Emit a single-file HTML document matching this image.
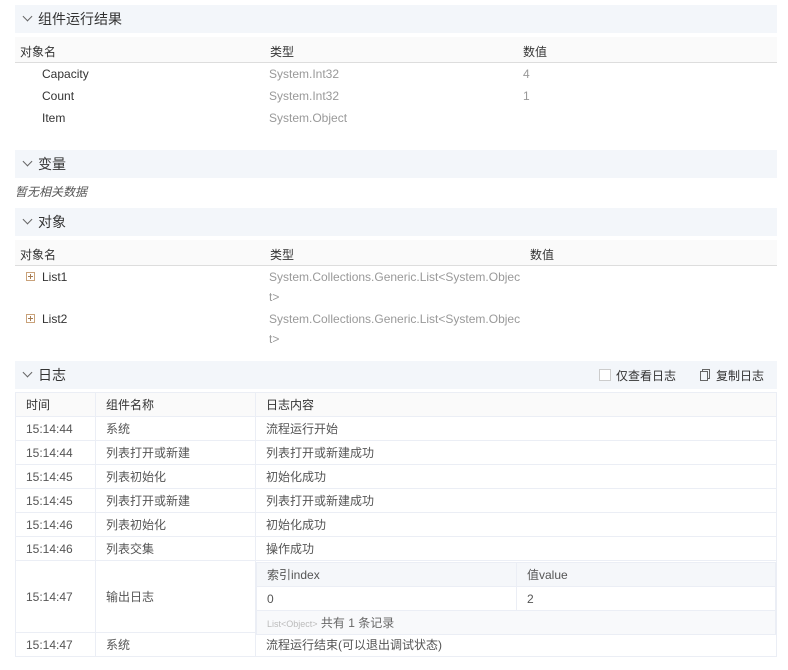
<!DOCTYPE html>
<html><head><meta charset="utf-8"><style>
*{margin:0;padding:0;box-sizing:border-box}
body{width:788px;height:670px;background:#fff;font-family:"Liberation Sans","Noto Sans CJK SC",sans-serif;font-size:12px;color:#333;position:relative;overflow:hidden}
.a{position:absolute;white-space:nowrap}
.hd{position:absolute;left:15px;width:762px;height:28px;background:#f3f6fa;font-size:14px;line-height:28px;padding-left:23px}
.hd:before{content:"";position:absolute;left:9px;top:8px;width:6px;height:6px;border-right:1px solid #666;border-bottom:1px solid #666;transform:rotate(45deg)}
.th{position:absolute;left:15px;width:762px;height:26px;background:#fafafa;border-bottom:1px solid #ddd}
.g{color:#999}
table{position:absolute;border-collapse:collapse;font-size:12px;color:#555}
td{border:1px solid #ebeef5;height:24px;padding-left:10px;vertical-align:middle}
.plus{position:absolute;width:9px;height:9px;border:1px solid #c9a27a}
.plus:before{content:"";position:absolute;left:1px;top:3px;width:5px;height:1px;background:#a67c52}
.plus:after{content:"";position:absolute;left:3px;top:1px;width:1px;height:5px;background:#a67c52}
</style></head><body>
<div class="hd" style="top:5px">组件运行结果</div>
<div class="th" style="top:37px"></div>
<div class="a" style="left:20px;top:43px">对象名</div><div class="a" style="left:270px;top:43px">类型</div><div class="a" style="left:523px;top:43px">数值</div>
<div class="a" style="left:42px;top:67px">Capacity</div><div class="a g" style="left:269px;top:67px">System.Int32</div><div class="a g" style="left:523px;top:67px">4</div>
<div class="a" style="left:42px;top:89px">Count</div><div class="a g" style="left:269px;top:89px">System.Int32</div><div class="a g" style="left:523px;top:89px">1</div>
<div class="a" style="left:42px;top:111px">Item</div><div class="a g" style="left:269px;top:111px">System.Object</div>

<div class="hd" style="top:150px">变量</div>
<div class="a" style="left:15px;top:183px;font-style:italic;color:#555">暂无相关数据</div>

<div class="hd" style="top:208px">对象</div>
<div class="th" style="top:240px"></div>
<div class="a" style="left:20px;top:246px">对象名</div><div class="a" style="left:270px;top:246px">类型</div><div class="a" style="left:530px;top:246px">数值</div>
<div class="plus" style="left:26px;top:272px"></div><div class="a" style="left:42px;top:270px">List1</div>
<div class="a g" style="left:269px;top:270px">System.Collections.Generic.List&lt;System.Objec</div><div class="a g" style="left:269px;top:290px">t&gt;</div>
<div class="plus" style="left:26px;top:314px"></div><div class="a" style="left:42px;top:312px">List2</div>
<div class="a g" style="left:269px;top:312px">System.Collections.Generic.List&lt;System.Objec</div><div class="a g" style="left:269px;top:332px">t&gt;</div>

<div class="hd" style="top:361px">日志</div>
<div class="a" style="left:599px;top:369px;width:12px;height:12px;border:1px solid #ccc;background:#fff"></div>
<div class="a" style="left:616px;top:367px">仅查看日志</div>
<div class="a" style="left:702px;top:369px;width:8px;height:10px;border:1px solid #666"></div>
<div class="a" style="left:700px;top:371px;width:8px;height:10px;border:1px solid #666;background:#f3f6fa"></div>
<div class="a" style="left:716px;top:367px">复制日志</div>

<table style="left:15px;top:392px;width:762px">
<tr style="background:#fafafa;color:#333"><td style="width:80px">时间</td><td style="width:160px">组件名称</td><td>日志内容</td></tr>
<tr><td>15:14:44</td><td>系统</td><td>流程运行开始</td></tr>
<tr><td>15:14:44</td><td>列表打开或新建</td><td>列表打开或新建成功</td></tr>
<tr><td>15:14:45</td><td>列表初始化</td><td>初始化成功</td></tr>
<tr><td>15:14:45</td><td>列表打开或新建</td><td>列表打开或新建成功</td></tr>
<tr><td>15:14:46</td><td>列表初始化</td><td>初始化成功</td></tr>
<tr><td>15:14:46</td><td>列表交集</td><td>操作成功</td></tr>
<tr><td style="height:72px">15:14:47</td><td>输出日志</td><td style="padding:0"></td></tr>
<tr><td>15:14:47</td><td>系统</td><td>流程运行结束(可以退出调试状态)</td></tr>
</table>
<table style="left:256px;top:562px;width:520px">
<tr style="background:#f5f7fa"><td style="width:260px;height:23px">索引index</td><td>值value</td></tr>
<tr><td>0</td><td>2</td></tr>
<tr style="background:#f8f9fb"><td colspan="2" style="height:24px;color:#666"><span style="font-size:9px;color:#bbb">List&lt;Object&gt;</span> 共有 1 条记录</td></tr>
</table>
</body></html>
